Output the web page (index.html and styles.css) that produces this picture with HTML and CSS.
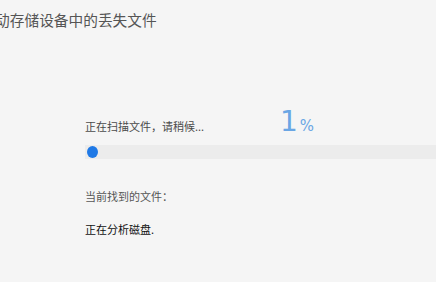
FILE: index.html
```html
<!DOCTYPE html>
<html lang="zh-CN">
<head>
  <meta charset="UTF-8">
  <title>恢复移动存储设备中的丢失文件</title>
  <link rel="stylesheet" href="styles.css">
</head>
<body>
  <h1 class="title">恢复移动存储设备中的丢失文件</h1>

  <div class="scan">
    <div class="status-row">
      <span class="status">正在扫描文件，请稍候...</span>
      <span class="percent">1<small>%</small></span>
    </div>

    <!-- progress track, dot is the 1% fill -->
    <div class="track">
      <div class="dot"></div>
    </div>

    <p class="found-label">当前找到的文件：</p>
    <p class="found-file">正在分析磁盘.</p>
  </div>
</body>
</html>
```

FILE: styles.css
```css
body { margin: 0; background: #f5f5f5; font-family: "Noto Sans CJK SC", "Noto Sans", sans-serif; overflow: hidden; }
.title { margin: 0 0 0 -49px; padding-top: 10px; font-size: 14.7px; line-height: 20px; font-weight: normal; color: #555; white-space: nowrap; }
.scan { margin-top: 78px; padding-left: 85px; }
.status-row { display: flex; align-items: baseline; line-height: 28px; height: 28px; }
.status { width: 195px; font-size: 11px; color: #4a4a4a; }
.percent { font-family: "DejaVu Sans", sans-serif; font-size: 28px; color: #6aa6e4; }
.percent small { font-size: 15px; margin-left: 2px; }
.track { margin-top: 9px; height: 14px; background: #ececec; display: flex; align-items: center; padding-left: 2px; }
.dot { width: 11px; height: 12px; border-radius: 50%; background: #1f79e6; }
.found-label { margin: 29px 0 0; font-size: 11px; line-height: 16px; color: #555; }
.found-file { margin: 17px 0 0; font-size: 11px; line-height: 16px; color: #111; }
```
